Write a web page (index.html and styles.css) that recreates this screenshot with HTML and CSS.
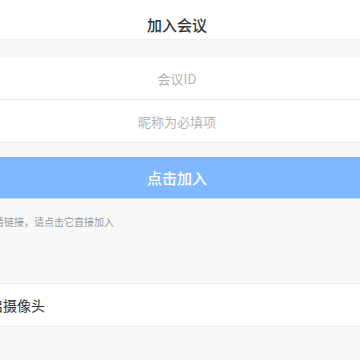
FILE: index.html
```html
<!DOCTYPE html>
<html lang="zh-CN">
<head>
<meta charset="utf-8">
<title>加入会议</title>
<link rel="stylesheet" href="styles.css">
</head>
<body>
<div class="page">
  <header class="header">加入会议</header>
  <div class="gap-top"></div>
  <div class="field"><span class="placeholder">会议ID</span></div>
  <div class="field"><span class="placeholder">昵称为必填项</span></div>
  <div class="gap-mid"></div>
  <button class="join">点击加入</button>
  <p class="hint">若有邀请链接，请点击它直接加入</p>
  <div class="option">开启摄像头</div>
</div>
</body>
</html>
```

FILE: styles.css
```css
html, body {
  margin: 0;
  padding: 0;
  background: #f8f8f8;
  overflow: hidden;
}
body {
  width: 360px;
  height: 360px;
  font-family: "Noto Sans CJK SC", "Noto Sans", sans-serif;
}
.page {
  width: 438px;
  margin-left: -42px;
  display: flex;
  flex-direction: column;
}
.header {
  height: 29px;
  padding-top: 10px;
  background: #fff;
  border-bottom: 1px solid #efefef;
  display: flex;
  align-items: center;
  justify-content: center;
  font-size: 15px;
  font-weight: 500;
  color: #333;
}
.gap-top {
  height: 17px;
}
.field {
  height: 42px;
  background: #fff;
  border-bottom: 1px solid #ebebeb;
  display: flex;
  align-items: center;
  justify-content: center;
}
.placeholder {
  font-size: 13px;
  color: #b3b3b3;
}
.gap-mid {
  height: 14px;
}
.join {
  height: 42px;
  border: 0;
  border-bottom: 1px solid #c4ddff;
  padding: 0;
  margin: 0;
  background: #80b8ff;
  color: #fff;
  font-family: inherit;
  font-size: 15px;
  font-weight: 500;
  width: 100%;
}
.hint {
  margin: 0;
  padding: 15px 0 0 6px;
  height: 69px;
  font-size: 10px;
  line-height: 16px;
  color: #999;
}
.option {
  height: 42px;
  background: #fff;
  border-top: 1px solid #ececec;
  border-bottom: 1px solid #ececec;
  padding-left: 17px;
  display: flex;
  align-items: center;
  font-size: 14px;
  color: #333;
}
```
